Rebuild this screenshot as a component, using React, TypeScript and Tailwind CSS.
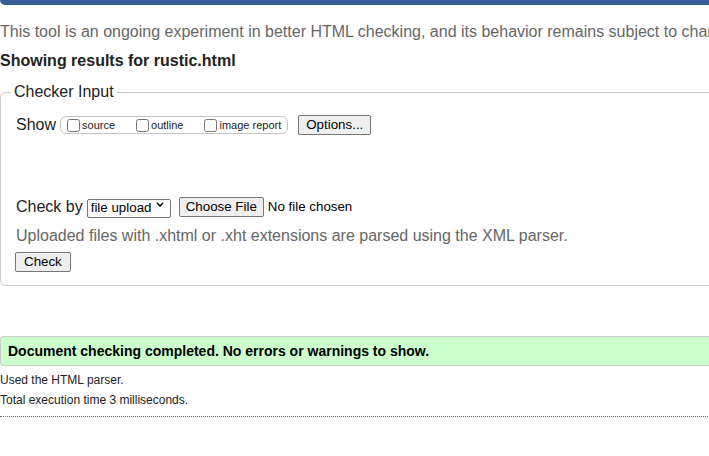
import React from 'react';

const FONT = "font-['Liberation_Sans',Arial,sans-serif]";

function NativeButton({ label, className = '' }: { label: string; className?: string }) {
  return (
    <button
      type="button"
      className={`h-[20px] px-[6px] bg-[#efefef] border border-[#767676] rounded-[2px] text-[13.33px] leading-[16px] text-black ${className}`}
    >
      {label}
    </button>
  );
}

function Option({ label, first }: { label: string; first?: boolean }) {
  return (
    <label className={`flex items-center ${first ? '' : 'ml-[21px]'}`}>
      <input type="checkbox" className="m-0 w-[13px] h-[13px]" />
      <span className="ml-[2px] text-[11px] leading-[14px]">{label}</span>
    </label>
  );
}

export default function App() {
  return (
    <div className={`${FONT} w-[709px] h-[456px] overflow-hidden bg-white text-[#222]`}>
      <div className="w-[1000px]">
        {/* top bar */}
        <div className="h-[5px] bg-[#365d95] rounded-bl-[6px]" />

        <p className="mt-[17px] text-[16px] leading-[20px] text-[#666] whitespace-nowrap">
          This tool is an ongoing experiment in better HTML checking, and its behavior remains subject to change
        </p>
        <h2 className="mt-[9px] text-[16px] leading-[20px] font-bold">Showing results for rustic.html</h2>

        {/* Checker input */}
        <fieldset className="mt-[11px] border border-[#ccc] rounded-l-[6px] pl-[15px] pb-[12px]">
          <legend className="ml-[-5px] px-[3px] text-[16px] leading-[20px]">Checker Input</legend>

          <div className="mt-[13px] h-[20px] flex items-center">
            <span className="text-[16px] leading-[20px]">Show</span>
            <div className="ml-[4px] h-[18px] flex items-center border border-[#c4c4c4] rounded-[6px] pl-[6px] pr-[6px]">
              <Option label="source" first />
              <Option label="outline" />
              <Option label="image report" />
            </div>
            <NativeButton label="Options..." className="ml-[10px] px-[7px]" />
          </div>

          <div className="mt-[62px] h-[20px] flex items-center">
            <span className="text-[16px] leading-[20px]">Check by</span>
            <div className="relative ml-[4px]">
              <select className="appearance-none w-[84px] h-[19px] border border-[#767676] rounded-[2px] bg-white pl-[3px] text-[13.33px] leading-[16px] text-black">
                <option>file upload</option>
              </select>
              <svg
                className="absolute right-[7px] top-[7px] pointer-events-none"
                width="8"
                height="5"
                viewBox="0 0 8 5"
              >
                <path d="M1 1l3 3 3-3" fill="none" stroke="#000" strokeWidth="1.6" />
              </svg>
            </div>
            <NativeButton label="Choose File" className="ml-[8px]" />
            <span className="ml-[4px] text-[13.33px] leading-[16px] text-black">No file chosen</span>
          </div>

          <p className="mt-[9px] text-[16px] leading-[20px] text-[#666]">
            Uploaded files with .xhtml or .xht extensions are parsed using the XML parser.
          </p>

          <NativeButton label="Check" className="mt-[6px] -ml-[1px] px-[8px]" />
        </fieldset>

        {/* results */}
        <div className="mt-[50px] h-[30px] flex items-center bg-[#ccffcc] border-y border-l border-[#ccc] rounded-l-[4px] pl-[7px]">
          <span className="text-[14px] leading-[18px] font-bold text-black">
            Document checking completed. No errors or warnings to show.
          </span>
        </div>

        <p className="mt-[4px] text-[12px] leading-[20px]">Used the HTML parser.</p>
        <p className="text-[12px] leading-[20px]">Total execution time 3 milliseconds.</p>
        <div className="mt-[6px] border-t border-dotted border-[#666]" />
      </div>
    </div>
  );
}
